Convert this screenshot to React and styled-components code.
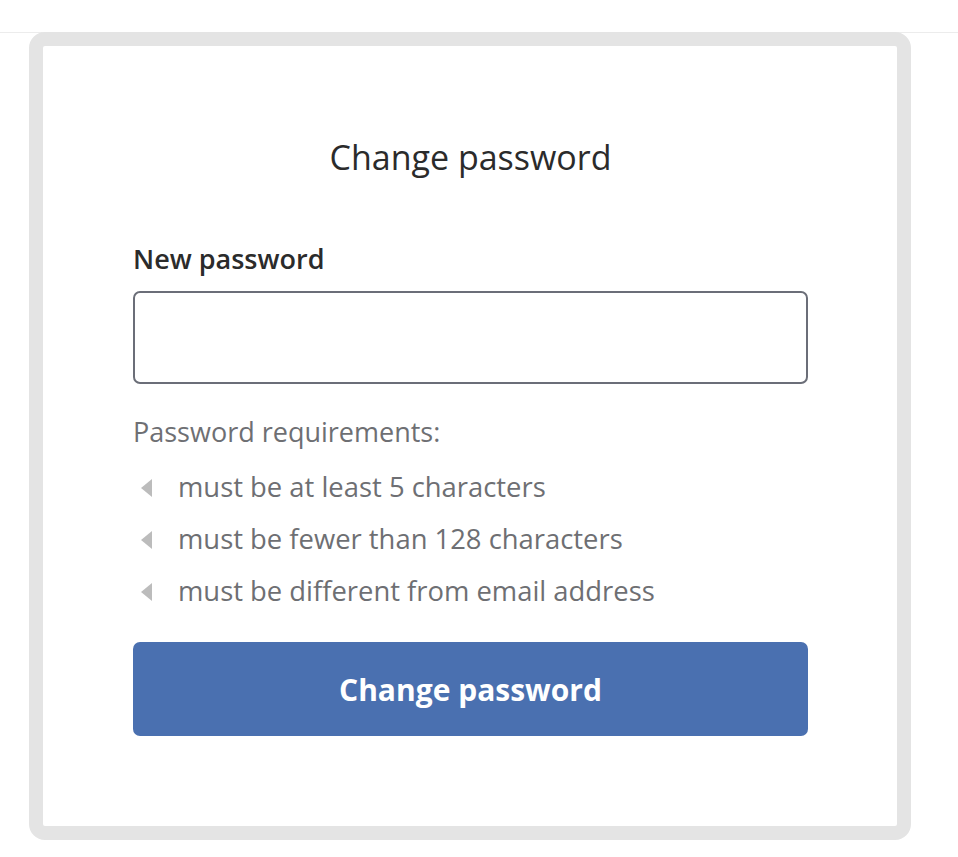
import React from "react";
import styled, { createGlobalStyle } from "styled-components";

const GlobalStyle = createGlobalStyle`
  html, body {
    margin: 0;
    padding: 0;
    background: #ffffff;
  }
  body {
    font-family: "Open Sans", "Noto Sans", sans-serif;
  }
`;

const Page = styled.div`
  width: 958px;
  min-height: 857px;
  display: flex;
  flex-direction: column;
`;

const TopBar = styled.div`
  height: 32px;
  border-bottom: 1px solid #ececec;
`;

const CardWrap = styled.div`
  display: flex;
  padding: 0 47px 17px 29px;
  margin-top: -1px;
`;

const Card = styled.div`
  flex: 1;
  border: 14px solid #e4e4e4;
  border-radius: 16px;
  background: #ffffff;
  padding: 87px 89px 90px 90px;
  display: flex;
  flex-direction: column;
`;

const Title = styled.h1`
  margin: 0 0 62px;
  text-align: center;
  font-size: 34px;
  font-weight: 400;
  color: #2b2b2b;
  line-height: 48px;
`;

const Label = styled.label`
  font-size: 27px;
  font-weight: 600;
  color: #2b2b2b;
  line-height: 32px;
  margin-bottom: 16px;
`;

const Input = styled.input`
  height: 93px;
  box-sizing: border-box;
  border: 2px solid #6b6e78;
  border-radius: 7px;
  padding: 0 16px;
  font-size: 24px;
  outline: none;
`;

const Hint = styled.p`
  margin: 31px 0 11px;
  font-size: 27px;
  color: #6e6f73;
  line-height: 34px;
`;

const Rules = styled.ul`
  list-style: none;
  margin: 0 0 26px;
  padding: 0;
`;

const Rule = styled.li`
  display: flex;
  align-items: center;
  height: 52px;
  font-size: 27.4px;
  color: #6e6f73;
`;

const Marker = styled.span`
  width: 0;
  height: 0;
  margin: 4px 26px 0 8px;
  border-top: 9px solid transparent;
  border-bottom: 9px solid transparent;
  border-right: 11px solid #bcbcbc;
`;

const Button = styled.button`
  height: 94px;
  border: none;
  border-radius: 7px;
  background: #4a70b0;
  color: #ffffff;
  font-family: inherit;
  font-size: 30px;
  font-weight: 700;
  cursor: pointer;
`;

const rules = [
  "must be at least 5 characters",
  "must be fewer than 128 characters",
  "must be different from email address",
];

export default function App() {
  return (
    <>
      <GlobalStyle />
      <Page>
        <TopBar />
        <CardWrap>
          <Card>
            <Title>Change password</Title>
            <Label htmlFor="new-password">New password</Label>
            <Input id="new-password" type="password" />
            <Hint>Password requirements:</Hint>
            <Rules>
              {rules.map((r) => (
                <Rule key={r}>
                  <Marker />
                  {r}
                </Rule>
              ))}
            </Rules>
            <Button>Change password</Button>
          </Card>
        </CardWrap>
      </Page>
    </>
  );
}
